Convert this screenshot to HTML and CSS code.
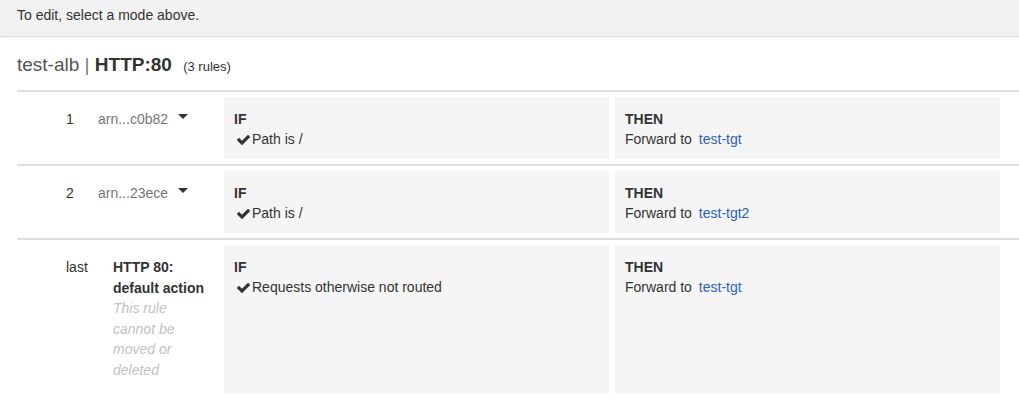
FILE: index.html
```html
<!DOCTYPE html>
<html>
<head>
<meta charset="utf-8">
<link rel="stylesheet" href="styles.css">
</head>
<body>
<div class="banner">To edit, select a mode above.</div>
<div class="heading"><span class="lb">test-alb</span> <span class="sep">|</span> <span class="listener">HTTP:80</span> <span class="count">(3 rules)</span></div>
<div class="rules">
  <div class="rule">
    <div class="num">1</div>
    <div class="name">arn...c0b82<span class="caret"></span></div>
    <div class="cards">
      <div class="card"><div class="label">IF</div><div><svg class="check" viewBox="121 334 1550 1188"><path d="M1671 566q0 40-28 68l-724 724-136 136q-28 28-68 28t-68-28l-136-136-362-362q-28-28-28-68t28-68l136-136q28-28 68-28t68 28l294 295 656-657q28-28 68-28t68 28l136 136q28 28 28 68z"/></svg>Path is /</div></div>
      <div class="card"><div class="label">THEN</div><div>Forward to <a class="link">test-tgt</a></div></div>
    </div>
  </div>
  <div class="rule">
    <div class="num">2</div>
    <div class="name">arn...23ece<span class="caret"></span></div>
    <div class="cards">
      <div class="card"><div class="label">IF</div><div><svg class="check" viewBox="121 334 1550 1188"><path d="M1671 566q0 40-28 68l-724 724-136 136q-28 28-68 28t-68-28l-136-136-362-362q-28-28-28-68t28-68l136-136q28-28 68-28t68 28l294 295 656-657q28-28 68-28t68 28l136 136q28 28 28 68z"/></svg>Path is /</div></div>
      <div class="card"><div class="label">THEN</div><div>Forward to <a class="link">test-tgt2</a></div></div>
    </div>
  </div>
  <div class="rule last">
    <div class="num">last</div>
    <div class="name">
      <div class="label">HTTP 80:</div>
      <div class="label">default action</div>
      <div class="note">This rule<br>cannot be<br>moved or<br>deleted</div>
    </div>
    <div class="cards">
      <div class="card"><div class="label">IF</div><div><svg class="check" viewBox="121 334 1550 1188"><path d="M1671 566q0 40-28 68l-724 724-136 136q-28 28-68 28t-68-28l-136-136-362-362q-28-28-28-68t28-68l136-136q28-28 68-28t68 28l294 295 656-657q28-28 68-28t68 28l136 136q28 28 28 68z"/></svg>Requests otherwise not routed</div></div>
      <div class="card"><div class="label">THEN</div><div>Forward to <a class="link">test-tgt</a></div></div>
    </div>
  </div>
</div>
</body>
</html>
```
FILE: styles.css
```css
* { box-sizing: border-box; }
body {
  margin: 0;
  font-family: "Liberation Sans", Arial, Helvetica, sans-serif;
  font-size: 14px;
  color: #333;
  background: #fff;
}
.banner {
  height: 37px;
  padding: 5px 17px 0;
  line-height: 20px;
  background: #f2f2f2;
  border-bottom: 1px solid #e0e0e0;
  box-shadow: 0 1px 2px rgba(0, 0, 0, 0.07);
}
.heading {
  margin: 16px 0 0 17px;
  font-size: 19px;
  line-height: 24px;
  height: 24px;
  white-space: nowrap;
}
.lb { color: #555; }
.sep { color: #777; }
.listener { font-weight: bold; color: #333; }
.count { font-size: 13px; margin-left: 6px; color: #333; }
.rules {
  margin: 13px 0 0 17px;
}
.rule {
  display: flex;
  border-top: 2px solid #dedede;
  padding: 5px 19px 5px 49px;
}
.num {
  width: 32px;
  padding-top: 12px;
  line-height: 20px;
}
.name {
  width: 126px;
  padding-top: 12px;
  line-height: 20px;
  color: #777;
  white-space: nowrap;
}
.caret {
  display: inline-block;
  width: 0;
  height: 0;
  margin-left: 10px;
  border-top: 5px solid #333;
  border-left: 5px solid transparent;
  border-right: 5px solid transparent;
  vertical-align: 5px;
}
.cards {
  flex: 1;
  display: flex;
  gap: 6px;
}
.card {
  flex: 1;
  background: #f5f5f5;
  padding: 12px 10px 10px;
  line-height: 20px;
  white-space: nowrap;
}
.label { font-weight: bold; color: #333; }
.check {
  width: 13px;
  height: 10px;
  margin: 0 2px 0 3px;
  fill: #333;
  vertical-align: -1px;
}
.link { color: #2c63b8; margin-left: 3px; text-decoration: none; }
.rule.last .num { line-height: 20.5px; }
.rule.last .name {
  padding-left: 15px;
  padding-bottom: 13px;
  line-height: 20.5px;
}
.note { font-style: italic; color: #c2c2c2; }
```
